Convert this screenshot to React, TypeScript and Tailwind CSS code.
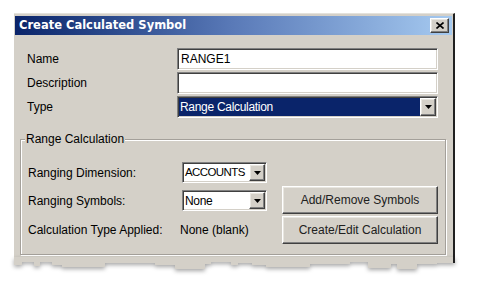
const sunken =
  'border-t-[#808080] border-l-[#808080] border-b-white border-r-white border shadow-[inset_1px_1px_0_#404040,inset_-1px_-1px_0_#d4d0c8]';
const raised =
  'border border-t-white border-l-white border-b-[#404040] border-r-[#404040] shadow-[inset_-1px_-1px_0_#808080,inset_1px_1px_0_#e8e6e0] bg-[#d4d0c8]';

function Arrow() {
  return (
    <div className={`w-[16px] h-full shrink-0 flex items-center justify-center ${raised}`}>
      <svg width="7" height="4" viewBox="0 0 7 4">
        <path d="M0 0h7L3.5 4z" fill="#000" />
      </svg>
    </div>
  );
}

function Select({
  value,
  selected = false,
  tight = false,
  className = '',
}: {
  value: string;
  selected?: boolean;
  tight?: boolean;
  className?: string;
}) {
  return (
    <div className={`flex items-stretch bg-white p-[1px] ${sunken} ${className}`}>
      <div
        className={`flex-1 flex items-center pl-[1px] overflow-hidden whitespace-nowrap ${
          tight ? 'text-[11.5px] tracking-[-0.6px]' : 'tracking-[-0.3px]'
        } ${selected ? 'bg-[#0a246a] text-white' : 'text-black'}`}
      >
        {value}
      </div>
      <Arrow />
    </div>
  );
}

// torn paper edge at the bottom of the screenshot
const tears = [
  'w-[8px] h-[8px]', 'w-[12px] h-[5px]', 'w-[6px] h-[9px]', 'w-[12px] h-[5px]', 'w-[10px] h-[8px]',
  'w-[44px] h-[10px]', 'w-[50px] h-[6px]', 'w-[20px] h-[8px]', 'w-[30px] h-[12px]', 'w-[6px] h-[7px]',
  'w-[20px] h-[5px]', 'w-[8px] h-[8px]', 'w-[14px] h-[6px]', 'w-[14px] h-[8px]', 'w-[44px] h-[10px]',
  'w-[40px] h-[7px]', 'w-[18px] h-[5px]', 'w-[24px] h-[11px]', 'w-[6px] h-[7px]', 'w-[20px] h-[12px]',
  'w-[20px] h-[7px]', 'w-[16px] h-[6px]',
];

export default function App() {
  return (
    <div className="w-[490px] h-[296px] bg-white pt-[13px] pl-[14px] font-['Liberation_Sans',Arial,sans-serif] text-[12px] text-black">
      <div className="w-[441px] relative">
        <div className="bg-[#d4d0c8] border-t border-t-[#e4e2dc] border-r-2 border-r-[#202020] pt-[2px] pl-[1px] pr-[1px]">
          {/* title bar */}
          <div className="h-[19px] flex items-center justify-between pl-[4px] pr-[3px] bg-gradient-to-r from-[#0a246a] via-[#5a7ab8] to-[#a6caf0]">
            <span className="font-['DejaVu_Sans',Verdana,sans-serif] font-bold text-[11.5px] text-white">
              Create Calculated Symbol
            </span>
            <div className={`w-[19px] h-[15px] flex items-center justify-center ${raised}`}>
              <svg width="8" height="7" viewBox="0 0 8 7">
                <path d="M0.5 0.5L7.5 6.5M7.5 0.5L0.5 6.5" stroke="#000" strokeWidth="1.6" />
              </svg>
            </div>
          </div>

          {/* top fields */}
          <div className="grid grid-cols-[150px_261px] gap-y-[2px] pl-[12px] pt-[13px] items-center">
            <span>Name</span>
            <div className={`h-[22px] bg-white flex items-center pl-[3px] ${sunken}`}>RANGE1</div>
            <span>Description</span>
            <div className={`h-[22px] bg-white ${sunken}`} />
            <span>Type</span>
            <Select value="Range Calculation" selected className="h-[22px]" />
          </div>

          {/* group box */}
          <div className="ml-[5px] mr-[6px] mt-[21px] relative border border-[#a4a09a] shadow-[1px_1px_0_white,inset_1px_1px_0_white] pb-[10px]">
            <span className="absolute left-[4px] -top-[8px] bg-[#d4d0c8] px-[1px] leading-[14px]">Range Calculation</span>
            <div className="grid grid-cols-[139px_85px_156px] gap-x-[15px] pl-[7px] pt-[22px] items-center">
              <span>Ranging Dimension:</span>
              <Select value="ACCOUNTS" tight className="h-[21px]" />
              <span />
              <span className="mt-[4px]">Ranging Symbols:</span>
              <Select value="None" className="h-[21px] mt-[4px]" />
              <div className={`h-[28px] mt-[3px] flex items-center justify-center text-[#202020] ${raised}`}>
                Add/Remove Symbols
              </div>
              <span className="mt-[2px]">Calculation Type Applied:</span>
              <span className="mt-[2px] -ml-[2px]">None (blank)</span>
              <div className={`h-[28px] mt-[2px] flex items-center justify-center text-[#202020] ${raised}`}>
                Create/Edit Calculation
              </div>
            </div>
          </div>
          <div className="h-[3px]" />
        </div>
        {/* torn edge */}
        <div className="flex items-start -mt-[1px] drop-shadow-[0_2px_2px_rgba(0,0,0,0.35)]">
          {tears.map((t, i) => (
            <div key={i} className={`bg-[#d4d0c8] ${t}`} />
          ))}
          <div className="flex-1 h-[6px] bg-[#d4d0c8] border-r-2 border-r-[#202020]" />
        </div>
      </div>
    </div>
  );
}
